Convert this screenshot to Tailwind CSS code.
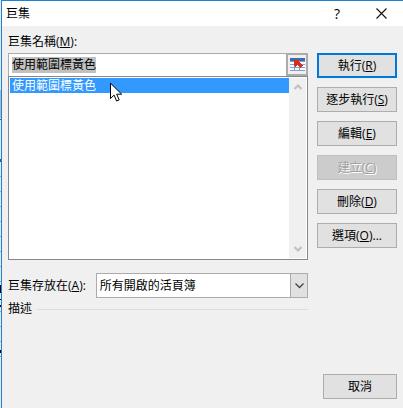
<!DOCTYPE html>
<html lang="zh-Hant">
<head>
    <meta charset="UTF-8">
    <meta name="viewport" content="width=device-width, initial-scale=1.0">
    <title>巨集</title>
    <script src="https://cdn.jsdelivr.net/npm/@tailwindcss/browser@4"></script>
</head>
<body class="flex min-h-screen bg-[#d4d4d4] text-xs text-black font-['Open_Sans','Noto_Sans_CJK_TC',sans-serif]">
    <!-- Bord de la feuille de calcul -->
    <svg class="w-px h-[408px] shrink-0" viewBox="0 0 1 408" preserveAspectRatio="none" shape-rendering="crispEdges">
        <path fill="#e8e8e8" d="M0 0h1v408H0z"/>
        <path fill="#b4b7bd" d="M0 90h1v28H0z"/>
        <path fill="#555" d="M0 119h1v1H0zM0 159h1v3H0z"/>
        <path fill="#a8a8a8" d="M0 176h1v1H0zM0 191h1v1H0zM0 206h1v1H0zM0 221h1v1H0zM0 236h1v1H0zM0 251h1v1H0zM0 266h1v1H0zM0 281h1v1H0zM0 311h1v1H0zM0 326h1v1H0zM0 341h1v1H0zM0 356h1v1H0z"/>
        <path fill="#000" d="M0 285h1v8H0zM0 299h1v1H0zM0 305h1v2H0zM0 350h1v3H0z"/>
    </svg>

    <main class="flex-1 flex flex-col bg-[#f0f0f0] border-l border-t border-[#1883d7]">
        <header class="flex items-center h-[25px] bg-white pl-1">
            <h1 class="flex-1">巨集</h1>
            <button type="button" class="w-11 h-6 text-sm" aria-label="說明">?</button>
            <button type="button" class="w-11 h-6 flex items-center justify-center" aria-label="關閉">
                <svg class="w-[11px] h-[11px]" viewBox="0 0 11 11" fill="none" stroke="#111" stroke-width="1.1"><path d="M.5.5l10 10M10.5.5l-10 10"/></svg>
            </button>
        </header>

        <form class="flex-1 flex flex-col justify-between pt-2 pb-[9px] px-1.5">
            <div class="flex gap-[9px]">
                <div class="flex-1 min-w-0">
                    <label for="macro-name" class="block h-[19px] leading-4">巨集名稱(<u>M</u>):</label>
                    <div class="flex h-[23px] border border-b-0 border-[#ababab] bg-white">
                        <input id="macro-name" type="text" value="使用範圍標黃色" class="flex-1 min-w-0 pl-[3px] outline-none leading-4 selection:bg-[#c0c0c0]/99 selection:text-black">
                        <button type="button" class="w-[21px] flex items-center justify-center bg-[#efefef] border-l-2 border-b-2 border-r border-t border-[#ababab]" aria-label="參照">
                            <svg class="w-[15px] h-[13px]" viewBox="0 0 15 13" shape-rendering="crispEdges">
                                <path fill="#7f9fd6" d="M0 0h15v13H0z"/>
                                <path fill="#3f68b5" d="M0 0h15v3H0z"/>
                                <path fill="#fff" d="M0 4h4v2H0zM5 4h4v2H5zM10 4h5v2h-5zM0 7h4v2H0zM5 7h4v2H5zM10 7h5v2h-5zM0 10h4v2H0zM5 10h4v2H5zM10 10h5v2h-5z"/>
                                <path fill="#d5301a" d="M4 2h6v1H9v1h1v1h1v1h1v1h1v1h-1v1h-1v1h-1V9H9V8H8V7H7v1H6v1H5V8H4z"/>
                            </svg>
                        </button>
                    </div>
                    <div class="relative flex h-[184px] p-px bg-white border border-[#828790]">
                        <ul role="listbox" aria-label="巨集清單" class="flex-1">
                            <li role="option" aria-selected="true" class="h-[15px] leading-4 pl-0.5 bg-[#3399ff] text-white">使用範圍標黃色</li>
                        </ul>
                        <div class="w-[17px] flex flex-col justify-between items-center py-1.5 bg-[#f0f0f0]">
                            <svg class="w-2 h-1.5" viewBox="0 0 8 6" fill="none" stroke="#bfbfbf" stroke-width="2"><path d="M.5 5L4 1.5 7.5 5"/></svg>
                            <svg class="w-2 h-1.5" viewBox="0 0 8 6" fill="none" stroke="#bfbfbf" stroke-width="2"><path d="M.5 1L4 4.5 7.5 1"/></svg>
                        </div>
                        <svg class="absolute left-[101px] top-[5px] w-[13px] h-5" viewBox="0 0 13 20"><path fill="#fff" stroke="#000" d="M.5 1.2v15.3l3.6-3.4 2.5 5.9 2.6-1.1-2.5-5.7h5z"/></svg>
                    </div>
                    <div class="flex items-center gap-2.5 mt-[13px]">
                        <label for="macro-scope" class="whitespace-nowrap">巨集存放在(<u>A</u>):</label>
                        <div class="relative flex-1 min-w-0">
                            <select id="macro-scope" class="block w-full h-[25px] appearance-none bg-white border border-[#ababab] pl-[3px] pr-5">
                                <option>所有開啟的活頁簿</option>
                            </select>
                            <span class="absolute right-0 inset-y-0 w-[18px] flex items-center justify-center bg-[#e1e1e1] border border-[#ababab] pointer-events-none">
                                <svg class="w-[9px] h-1.5" viewBox="0 0 9 6" fill="none" stroke="#444" stroke-width="1.3"><path d="M.5.5l4 4 4-4"/></svg>
                            </span>
                        </div>
                    </div>
                    <div class="flex items-center gap-[5px] mt-[3px]">
                        <h2>描述</h2>
                        <span class="flex-1 h-px bg-[#dcdcdc]"></span>
                    </div>
                </div>

                <div class="w-20 shrink-0 flex flex-col gap-[9px] pt-[19px]">
                    <button type="button" class="h-[25px] bg-[#e1e1e1] border-2 border-[#0078d7]">執行(<u>R</u>)</button>
                    <button type="button" class="h-[25px] bg-[#e1e1e1] border border-[#adadad]">逐步執行(<u>S</u>)</button>
                    <button type="button" class="h-[25px] bg-[#e1e1e1] border border-[#adadad]">編輯(<u>E</u>)</button>
                    <button type="button" disabled class="h-[25px] bg-[#cccccc] border border-[#bfbfbf] text-[#a0a0a0] text-shadow-[1px_1px_0_#fff]">建立(<u>C</u>)</button>
                    <button type="button" class="h-[25px] bg-[#e1e1e1] border border-[#adadad]">刪除(<u>D</u>)</button>
                    <button type="button" class="h-[25px] bg-[#e1e1e1] border border-[#adadad]">選項(<u>O</u>)...</button>
                </div>
            </div>
            <button type="button" class="self-end w-[74px] h-[25px] bg-[#e1e1e1] border border-[#adadad]">取消</button>
        </form>
    </main>
    <script>
        const nameBox = document.getElementById('macro-name');
        nameBox.focus();
        nameBox.select();
    </script>
</body>
</html>
